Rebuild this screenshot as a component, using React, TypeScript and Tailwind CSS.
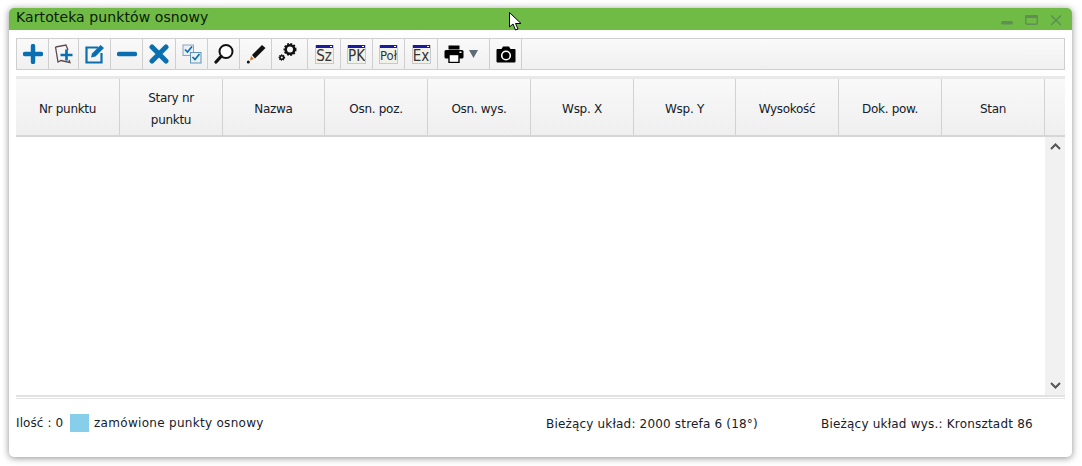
const B = "#0a6fb0";

function ToolBtn({ w, children }: { w: string; children?: React.ReactNode }) {
  return <div className={`${w} h-full shrink-0 border-r border-[#cfcfcf] flex items-center justify-center`}>{children}</div>;
}

function Doc({ label, size = "text-[15px]" }: { label: string; size?: string }) {
  return (
    <div className="w-[19px] h-[19px] flex flex-col border-x border-b border-[#c9c9c9] bg-[#f1f1ea] overflow-hidden">
      <div className="h-[3px] bg-[#1a1aa0] shrink-0 flex justify-end items-start pr-[1px]"><div className="w-[2px] h-[1px] mt-[1px] bg-white" /></div>
      <div className={`${size} leading-[16px] text-center text-[#333] whitespace-nowrap font-['DejaVu_Sans_Condensed','DejaVu_Sans',sans-serif]`}>{label}</div>
    </div>
  );
}

const columns: [string, string, string][] = [
  ["Nr punktu", "w-[104px]", "px-1"],
  ["Stary nr punktu", "w-[103px]", "px-6"],
  ["Nazwa", "w-[102px]", "px-1"],
  ["Osn. poz.", "w-[103px]", "px-1"],
  ["Osn. wys.", "w-[103px]", "px-1"],
  ["Wsp. X", "w-[103px]", "px-1"],
  ["Wsp. Y", "w-[102px]", "px-1"],
  ["Wysokość", "w-[103px]", "px-1"],
  ["Dok. pow.", "w-[103px]", "px-1"],
  ["Stan", "w-[103px]", "px-1"],
];

export default function App() {
  return (
    <div className="relative w-[1082px] h-[466px] bg-white overflow-hidden font-['DejaVu_Sans',sans-serif] pt-2 pl-[9px]">
      <div className="w-[1063px] h-[449px] bg-white rounded-[5px] shadow-[0_1px_7px_rgba(0,0,0,0.45)] overflow-hidden flex flex-col">
        <div className="h-[22px] shrink-0 bg-[#6fbb46] flex items-center pl-[7px] pr-[10px] text-[14px] tracking-[0.1px] text-[#0c1a06]">
          <span className="flex-1 leading-[18px] pb-[4px]">Kartoteka punktów osnowy</span>
          <svg width="62" height="14" viewBox="0 0 62 14" fill="none" className="mt-[3px]">
            <rect x="1" y="7" width="12" height="3.500" rx="1.500" fill="#5f8f57" />
            <rect x="25.700" y="1.700" width="11.600" height="8.600" rx="1.500" stroke="#5f8f57" strokeWidth="1.400" />
            <rect x="25" y="1" width="13" height="3" rx="1" fill="#5f8f57" />
            <path d="M51 1.500 L61 11 M61 1.500 L51 11" stroke="#5a8f55" strokeWidth="1.400" />
          </svg>
        </div>
        <div className="flex-1 px-[7px] pt-2 flex flex-col min-h-0">
          <div className="h-[32px] shrink-0 border border-[#cfcfcf] bg-gradient-to-b from-[#fafafa] to-[#f0f0f0] flex items-center">
            <ToolBtn w="w-[32px]">
              <svg width="20" height="20" viewBox="0 0 20 20"><path d="M10 2v16M2 10h16" stroke={B} strokeWidth="4.400" strokeLinecap="round" /></svg>
            </ToolBtn>
            <ToolBtn w="w-[30px]">
              <svg width="20" height="20" viewBox="0 0 20 20" fill="none">
                <path d="M1.500 3 L12 1 L14 6 M15 16 L16 18.500 L7 16.500 L4 18 L1.500 3" stroke="#5b4a52" strokeWidth="1.300" />
                <path d="M12.500 5.500v11M6.500 11h12" stroke={B} strokeWidth="2.700" />
              </svg>
            </ToolBtn>
            <ToolBtn w="w-[32px]">
              <svg width="20" height="20" viewBox="0 0 20 20" fill="none">
                <path d="M13 3.500H1.500v15h15V9" stroke={B} strokeWidth="2.200" />
                <path d="M6 13.500 L7 9.500 L15.500 1 L19 4 L10.500 12.500 Z" fill={B} />
              </svg>
            </ToolBtn>
            <ToolBtn w="w-[32px]">
              <svg width="20" height="20" viewBox="0 0 20 20"><path d="M2 10h16" stroke={B} strokeWidth="4.400" strokeLinecap="round" /></svg>
            </ToolBtn>
            <ToolBtn w="w-[33px]">
              <svg width="20" height="20" viewBox="0 0 20 20"><path d="M3 3 L17 17 M17 3 L3 17" stroke={B} strokeWidth="5" strokeLinecap="round" /></svg>
            </ToolBtn>
            <ToolBtn w="w-[32px]">
              <svg width="20" height="20" viewBox="0 0 20 20" fill="none">
                <rect x="1" y="1" width="10.500" height="10.500" fill="#eaf0f5" stroke="#8aa4bd" />
                <rect x="8.500" y="8.500" width="10.500" height="10.500" fill="#eaf0f5" stroke="#5f93b8" />
                <path d="M3 5.500 L5.500 8 L10 2.500" stroke={B} strokeWidth="1.700" />
                <path d="M10.500 13 L13 15.500 L17.500 10" stroke={B} strokeWidth="1.700" />
              </svg>
            </ToolBtn>
            <ToolBtn w="w-[32px]">
              <svg width="20" height="20" viewBox="0 0 20 20" fill="none">
                <circle cx="12" cy="7.500" r="6.500" stroke="#111" strokeWidth="2" fill="#fff" />
                <path d="M7 12.500 L2 18" stroke="#111" strokeWidth="3.200" strokeLinecap="round" />
              </svg>
            </ToolBtn>
            <ToolBtn w="w-[32px]">
              <svg width="20" height="20" viewBox="0 0 20 20">
                <path d="M6 11 L16 1 L19.500 4 L9 14.500 Z" fill="#111" />
                <path d="M5 12 L8 15 L4 16.500 Z" fill="#c9761e" />
                <circle cx="2.300" cy="18" r="1.500" fill="#111" />
              </svg>
            </ToolBtn>
            <ToolBtn w="w-[36px]">
              <svg width="20" height="20" viewBox="0 0 20 20" fill="none" className="-ml-[3px] -mt-[2px]">
                <circle cx="12" cy="6.500" r="5.500" fill="#111" stroke="#111" strokeWidth="2" strokeDasharray="1.800 1.400" />
                <circle cx="12" cy="6.500" r="3" fill="#f6f6f6" />
                <circle cx="3.800" cy="14.500" r="2.600" fill="#111" stroke="#111" strokeWidth="1.400" strokeDasharray="1 0.900" />
                <circle cx="3.800" cy="14.500" r="1" fill="#f6f6f6" />
              </svg>
            </ToolBtn>
            <ToolBtn w="w-[33px]"><Doc label="Sz" /></ToolBtn>
            <ToolBtn w="w-[32px]"><Doc label="PK" /></ToolBtn>
            <ToolBtn w="w-[32px]"><Doc label="Poł" size="text-[13px]" /></ToolBtn>
            <ToolBtn w="w-[33px]"><Doc label="Ex" /></ToolBtn>
            <ToolBtn w="w-[52px]">
              <div className="flex items-center gap-[5px] -ml-[5px]">
                <svg width="20" height="18" viewBox="0 0 20 18">
                  <path d="M4.500 0.500h11v4h-11z" fill="#000" />
                  <rect x="0.500" y="5" width="19" height="8.500" rx="1.500" fill="#000" />
                  <rect x="5" y="9.500" width="10" height="8" fill="#fff" stroke="#000" strokeWidth="1.400" />
                  <rect x="15.500" y="6.500" width="2" height="1.500" fill="#fff" />
                </svg>
                <svg width="9" height="8" viewBox="0 0 9 8"><path d="M0 0h9L4.500 8z" fill="#5e6a76" /></svg>
              </div>
            </ToolBtn>
            <ToolBtn w="w-[32px]">
              <svg width="20" height="17" viewBox="0 0 20 17">
                <path d="M1.500 3h4l1.500-2.500h6L14.500 3h4a1 1 0 0 1 1 1v11.500a1 1 0 0 1-1 1h-17a1 1 0 0 1-1-1V4a1 1 0 0 1 1-1z" fill="#000" />
                <circle cx="10" cy="9.500" r="4.300" fill="none" stroke="#fff" strokeWidth="1.600" />
              </svg>
            </ToolBtn>
          </div>
          <div className="mt-[6px] h-[321px] shrink-0 border-t-2 border-t-[#e9e9e9] border-b-2 border-b-[#e2e2e2] flex flex-col">
            <div className="h-[59px] shrink-0 border-t border-[#e8e8e8] border-b-2 border-b-[#d6d6d6] bg-gradient-to-b from-[#f9f9f9] to-[#efefef] flex text-[12px] tracking-[-0.3px] text-[#13202c]">
              {columns.map(([t, w, p]) => (
                <div key={t} className={`${w} ${p} shrink-0 border-r border-[#d2d2d2] flex items-center justify-center text-center leading-[22px] pt-[4px]`}>{t}</div>
              ))}
            </div>
            <div className="flex-1 flex justify-end min-h-0">
              <div className="w-[20px] bg-[#f1f1f1] flex flex-col justify-between items-center pt-[6px] pb-[6px]">
                <svg width="11" height="7" viewBox="0 0 11 7" fill="none"><path d="M1 6 L5.500 1.500 L10 6" stroke="#555" strokeWidth="2" /></svg>
                <svg width="11" height="7" viewBox="0 0 11 7" fill="none"><path d="M1 1 L5.500 5.500 L10 1" stroke="#555" strokeWidth="2" /></svg>
              </div>
            </div>
          </div>
          <div className="h-px mt-px shrink-0 bg-[#e4e4e4]" />
          <div className="flex items-center h-[50px] pb-[3px] text-[12px] text-[#15202b] whitespace-nowrap">
            <span className="w-[54px] shrink-0 tracking-[0.1px]">Ilość : 0</span>
            <div className="w-[19px] h-[18px] bg-[#87ceeb] shrink-0" />
            <span className="ml-[5px] w-[452px] shrink-0 tracking-[0.3px]">zamówione punkty osnowy</span>
            <span className="w-[275px] shrink-0 pt-[3px] tracking-[0.18px]">Bieżący układ: 2000 strefa 6 (18°)</span>
            <span className="pt-[3px] tracking-[0.2px]">Bieżący układ wys.: Kronsztadt 86</span>
          </div>
        </div>
      </div>
      <svg className="absolute left-[509px] top-[12px]" width="14" height="20" viewBox="0 0 14 20">
        <path d="M0.500 0.500 L0.500 15 L4 12 L6.500 18 L9 17 L6.500 11.500 L12 11.500 Z" fill="#fff" stroke="#000" />
      </svg>
    </div>
  );
}
